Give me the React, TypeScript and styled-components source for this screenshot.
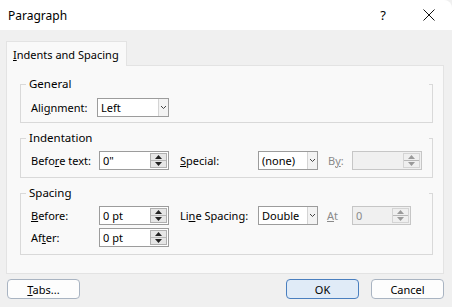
import styled, { createGlobalStyle } from 'styled-components';

const GlobalStyle = createGlobalStyle`
    html, body {
        margin: 0;
        padding: 0;
    }
    body {
        width: 452px;
        height: 307px;
        overflow: hidden;
        background: #f0f0f0;
        color: #000;
        font-family: "Noto Sans", "Open Sans", sans-serif;
        font-size: 11px;
    }
`;

function Chevron() {
    return (
        <svg width="7" height="5" viewBox="0 0 7 5">
            <path d="M1 1 L3.5 3.5 L6 1" fill="none" stroke="#444" strokeWidth="1" />
        </svg>
    );
}

function SpinArrows({ disabled }: { disabled?: boolean }) {
    const c = disabled ? '#9a9a9a' : '#222';
    return (
        <S_Spin $disabled={disabled}>
            <S_SpinHalf>
                <svg width="7" height="4" viewBox="0 0 7 4">
                    <path d="M0 4 L3.5 0 L7 4 Z" fill={c} />
                </svg>
            </S_SpinHalf>
            <S_SpinHalf $bottom>
                <svg width="7" height="4" viewBox="0 0 7 4">
                    <path d="M0 0 L3.5 4 L7 0 Z" fill={c} />
                </svg>
            </S_SpinHalf>
        </S_Spin>
    );
}

function SpinBox({ value, width, disabled }: { value: string; width: number; disabled?: boolean }) {
    return (
        <S_Field $width={width} $disabled={disabled}>
            <S_FieldText $disabled={disabled}>{value}</S_FieldText>
            <SpinArrows disabled={disabled} />
        </S_Field>
    );
}

function Select({ value, width }: { value: string; width: number }) {
    return (
        <S_Field $width={width}>
            <S_FieldText>{value}</S_FieldText>
            <S_DropArea>
                <Chevron />
            </S_DropArea>
        </S_Field>
    );
}

export default function App() {
    return (
        <S_Window>
            <GlobalStyle />
            <S_TitleBar>
                <S_Title>Paragraph</S_Title>
                <S_TitleButton>?</S_TitleButton>
                <S_TitleButton>
                    <svg width="12" height="12" viewBox="0 0 12 12">
                        <path d="M0.5 0.5 L11.5 11.5 M11.5 0.5 L0.5 11.5" stroke="#111" strokeWidth="1" />
                    </svg>
                </S_TitleButton>
            </S_TitleBar>

            <S_Body>
                <S_TabStrip>
                    <S_Tab>
                        <span>
                            <u>I</u>ndents and Spacing
                        </span>
                    </S_Tab>
                </S_TabStrip>
                <S_Panel>
                    <S_Group $top={13} $bottom={5}>
                        <S_Legend>General</S_Legend>
                        <S_Row>
                            <S_Label $width={66}>
                                Ali<u>g</u>nment:
                            </S_Label>
                            <Select value="Left" width={72} />
                        </S_Row>
                    </S_Group>

                    <S_Group $top={12} $bottom={7}>
                        <S_Legend>Indentation</S_Legend>
                        <S_Row>
                            <S_Label $width={68}>
                                Befo<u>r</u>e text:
                            </S_Label>
                            <SpinBox value={'0"'} width={70} />
                            <S_Label $width={78} $gap={11}>
                                <u>S</u>pecial:
                            </S_Label>
                            <Select value="(none)" width={60} />
                            <S_Label $width={24} $gap={10} $disabled>
                                B<u>y</u>:
                            </S_Label>
                            <SpinBox value="" width={70} disabled />
                        </S_Row>
                    </S_Group>

                    <S_Group $top={12} $bottom={7}>
                        <S_Legend>Spacing</S_Legend>
                        <S_Rows>
                            <S_Row>
                                <S_Label $width={68}>
                                    <u>B</u>efore:
                                </S_Label>
                                <SpinBox value="0 pt" width={70} />
                                <S_Label $width={78} $gap={11}>
                                    Li<u>n</u>e Spacing:
                                </S_Label>
                                <Select value="Double" width={60} />
                                <S_Label $width={25} $gap={9} $disabled>
                                    <u>A</u>t
                                </S_Label>
                                <SpinBox value="0" width={59} disabled />
                            </S_Row>
                            <S_Row>
                                <S_Label $width={68}>
                                    Af<u>t</u>er:
                                </S_Label>
                                <SpinBox value="0 pt" width={70} />
                            </S_Row>
                        </S_Rows>
                    </S_Group>
                </S_Panel>

                <S_ButtonBar>
                    <S_Button>
                        <span>
                            <u>T</u>abs...
                        </span>
                    </S_Button>
                    <S_Spacer />
                    <S_Button $primary>OK</S_Button>
                    <S_Button>Cancel</S_Button>
                </S_ButtonBar>
            </S_Body>
        </S_Window>
    );
}

const S_Window = styled.div`
    width: 452px;
    height: 307px;
    display: flex;
    flex-direction: column;
    background: #f0f0f0;
`;
const S_TitleBar = styled.div`
    height: 30px;
    flex-shrink: 0;
    display: flex;
    align-items: center;
    padding-left: 8px;
    background: #fff;
    border-top-right-radius: 8px;
`;
const S_Title = styled.div`
    flex: 1;
    font-size: 12px;
`;
const S_TitleButton = styled.div`
    width: 46px;
    height: 30px;
    display: flex;
    align-items: center;
    justify-content: center;
    font-size: 13px;
`;
const S_Body = styled.div`
    flex: 1;
    display: flex;
    flex-direction: column;
    padding: 11px 8px 0 6px;
`;
const S_TabStrip = styled.div`
    display: flex;
`;
const S_Tab = styled.div`
    width: 121px;
    height: 25px;
    box-sizing: border-box;
    display: flex;
    align-items: center;
    padding-left: 6px;
    white-space: nowrap;
    background: #f9f9f9;
    border: 1px solid #e3e3e3;
    border-bottom: none;
    margin-bottom: -1px;
    position: relative;
    z-index: 1;
`;
const S_Panel = styled.div`
    height: 209px;
    box-sizing: border-box;
    display: flex;
    flex-direction: column;
    gap: 15px;
    padding: 18px 10px 0 13px;
    background: #f9f9f9;
    border: 1px solid #e3e3e3;
`;
const S_Group = styled.div<{ $top: number; $bottom: number }>`
    position: relative;
    padding: ${(p) => p.$top}px 10px ${(p) => p.$bottom}px 10px;
    border: 1px solid #d9d9d9;
    border-top-color: transparent;
    &::before,
    &::after {
        content: '';
        position: absolute;
        top: -1px;
        height: 1px;
        background: #d9d9d9;
    }
    &::before {
        left: -1px;
        width: 6px;
    }
    &::after {
        right: -1px;
        width: 4px;
    }
`;
const S_Legend = styled.div`
    position: absolute;
    top: -10px;
    left: 7px;
    padding: 0 1px;
    line-height: 18px;
    font-size: 11.5px;
`;
const S_Rows = styled.div`
    display: flex;
    flex-direction: column;
    gap: 3px;
`;
const S_Row = styled.div`
    display: flex;
    align-items: center;
    height: 19px;
`;
const S_Label = styled.div<{ $width: number; $gap?: number; $disabled?: boolean }>`
    width: ${(p) => p.$width}px;
    margin-left: ${(p) => p.$gap ?? 0}px;
    flex-shrink: 0;
    white-space: nowrap;
    color: ${(p) => (p.$disabled ? '#8a8a8a' : '#000')};
`;
const S_Field = styled.div<{ $width: number; $disabled?: boolean }>`
    width: ${(p) => p.$width}px;
    height: 19px;
    box-sizing: border-box;
    display: flex;
    flex-shrink: 0;
    border: 1px solid ${(p) => (p.$disabled ? '#c6c6c6' : '#9c9c9c')};
    background: ${(p) => (p.$disabled ? '#f0f0f0' : '#fff')};
`;
const S_FieldText = styled.div<{ $disabled?: boolean }>`
    flex: 1;
    padding-left: 3px;
    line-height: 17px;
    white-space: nowrap;
    overflow: hidden;
    color: ${(p) => (p.$disabled ? '#8a8a8a' : '#000')};
`;
const S_DropArea = styled.div`
    width: 9px;
    display: flex;
    align-items: center;
    justify-content: center;
    border-left: 1px solid #d4d4d4;
    background: #f3f3f3;
`;
const S_Spin = styled.div<{ $disabled?: boolean }>`
    width: 15px;
    margin: 1px 1px 1px 0;
    display: flex;
    flex-direction: column;
    border: 1px solid ${(p) => (p.$disabled ? '#d4d4d4' : '#b0b0b0')};
    background: ${(p) => (p.$disabled ? '#efefef' : '#e6e6e6')};
`;
const S_SpinHalf = styled.div<{ $bottom?: boolean }>`
    flex: 1;
    display: flex;
    align-items: center;
    justify-content: center;
    border-top: ${(p) => (p.$bottom ? '1px solid #b8b8b8' : 'none')};
`;
const S_ButtonBar = styled.div`
    display: flex;
    align-items: center;
    gap: 12px;
    margin-top: 5px;
    padding-left: 1px;
`;
const S_Spacer = styled.div`
    flex: 1;
`;
const S_Button = styled.div<{ $primary?: boolean }>`
    width: 73px;
    height: 20px;
    box-sizing: border-box;
    display: flex;
    align-items: center;
    justify-content: center;
    border-radius: 4px;
    border: 1px solid ${(p) => (p.$primary ? '#4a7fbf' : '#a9b4c2')};
    background: ${(p) => (p.$primary ? '#e0ebf7' : '#fdfdfd')};
`;
